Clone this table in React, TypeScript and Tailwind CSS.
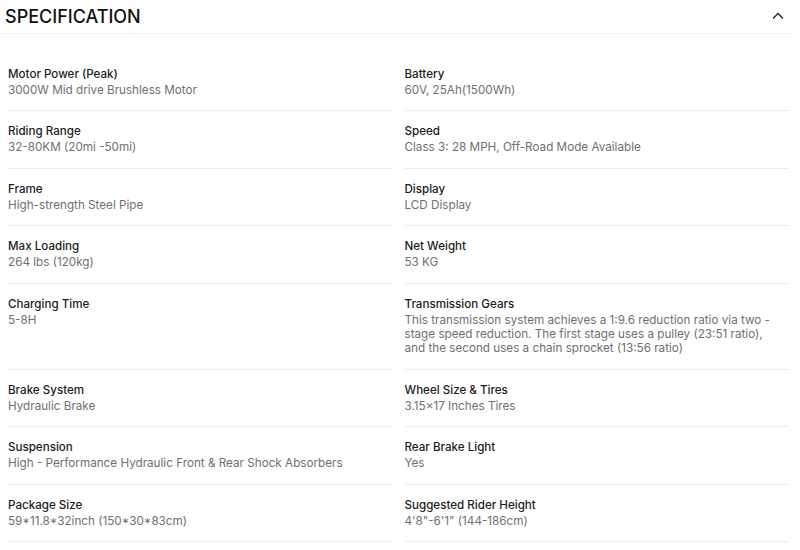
const specs: [string, string][] = [
  ['Motor Power (Peak)', '3000W Mid drive Brushless Motor'],
  ['Battery', '60V, 25Ah(1500Wh)'],
  ['Riding Range', '32-80KM (20mi -50mi)'],
  ['Speed', 'Class 3: 28 MPH, Off-Road Mode Available'],
  ['Frame', 'High-strength Steel Pipe'],
  ['Display', 'LCD Display'],
  ['Max Loading', '264 lbs (120kg)'],
  ['Net Weight', '53 KG'],
  ['Charging Time', '5-8H'],
  [
    'Transmission Gears',
    'This transmission system achieves a 1:9.6 reduction ratio via two - stage speed reduction. The first stage uses a pulley (23:51 ratio), and the second uses a chain sprocket (13:56 ratio)',
  ],
  ['Brake System', 'Hydraulic Brake'],
  ['Wheel Size & Tires', '3.15×17 Inches Tires'],
  ['Suspension', 'High - Performance Hydraulic Front & Rear Shock Absorbers'],
  ['Rear Brake Light', 'Yes'],
  ['Package Size', '59*11.8*32inch (150*30*83cm)'],
  ['Suggested Rider Height', '4\'8"-6\'1" (144-186cm)'],
]

export default function App() {
  return (
    <div className="w-[800px] h-[550px] bg-white font-['Inter',sans-serif] overflow-hidden">
      <div className="w-[792px]">
        <div className="h-[34px] flex items-center justify-between pl-[5px] pr-[8px] border-b border-[#f3f3f3]">
          <h2 className="text-[18px] leading-none font-medium text-[#111]">SPECIFICATION</h2>
          <svg width="12" height="8" viewBox="0 0 12 8" fill="none" className="-mt-[1px]">
            <path d="M1 6.5L6 1.5L11 6.5" stroke="#222" strokeWidth="1.4" />
          </svg>
        </div>
        <div className="pl-2 pr-1 pt-5 grid grid-cols-2 gap-x-[13px]">
          {specs.map(([label, value]) => (
            <div key={label} className="pt-3 pb-[13px] pr-3 border-b border-[#ececec]">
              <div className="text-[11.6px] leading-4 font-medium text-[#1c1c1c] mb-px">{label}</div>
              <div className="text-[11.7px] leading-[14.4px] text-[#707070]">{value}</div>
            </div>
          ))}
        </div>
      </div>
    </div>
  )
}
